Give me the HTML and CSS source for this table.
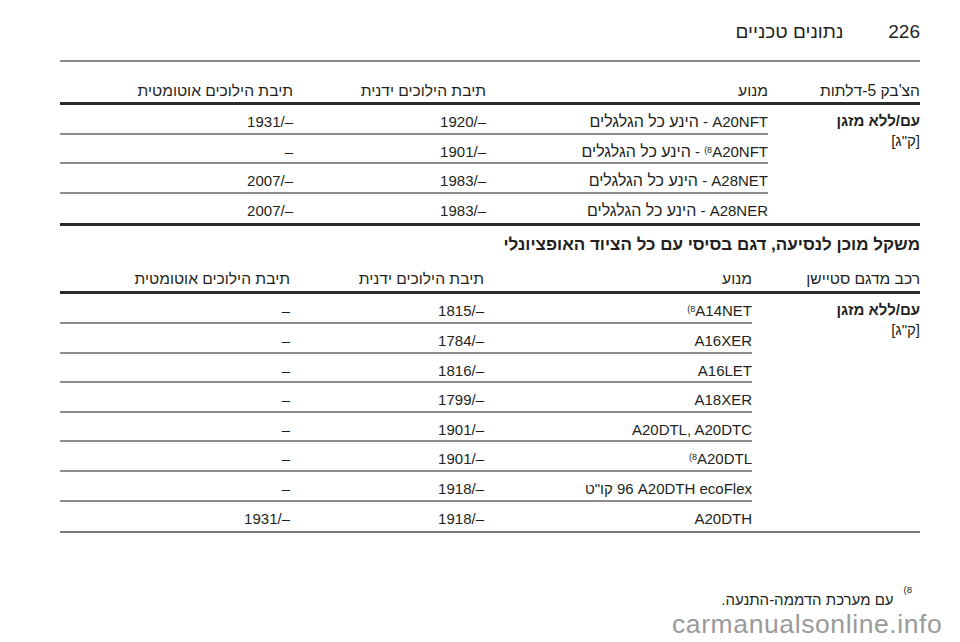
FILE: index.html
```html
<!DOCTYPE html>
<html lang="he" dir="rtl">
<head>
<meta charset="utf-8">
<title>226 נתונים טכניים</title>
<link rel="stylesheet" href="styles.css">
</head>
<body>
<div class="page">
  <header class="page-head">
    <span class="page-num">226</span>
    <span class="page-title">נתונים טכניים</span>
  </header>

  <div class="spec t1">
    <div class="th">הצ'בק 5-דלתות</div>
    <div class="th">מנוע</div>
    <div class="th">תיבת הילוכים ידנית</div>
    <div class="th">תיבת הילוכים אוטומטית</div>

    <div class="c1 rows4"><b>עם/ללא מזגן</b><br>[ק"ג]</div>
    <div class="td"><span dir="ltr"><bdi class="he">הינע כל הגלגלים</bdi> - A20NFT</span></div>
    <div class="td"><span dir="ltr">1920/–</span></div>
    <div class="td"><span dir="ltr">1931/–</span></div>

    <div class="td"><span dir="ltr"><bdi class="he">הינע כל הגלגלים</bdi> - <sup>(8</sup>A20NFT</span></div>
    <div class="td"><span dir="ltr">1901/–</span></div>
    <div class="td">–</div>

    <div class="td"><span dir="ltr"><bdi class="he">הינע כל הגלגלים</bdi> - A28NET</span></div>
    <div class="td"><span dir="ltr">1983/–</span></div>
    <div class="td"><span dir="ltr">2007/–</span></div>

    <div class="td last"><span dir="ltr"><bdi class="he">הינע כל הגלגלים</bdi> - A28NER</span></div>
    <div class="td last"><span dir="ltr">1983/–</span></div>
    <div class="td last"><span dir="ltr">2007/–</span></div>
  </div>

  <h2 class="section-title">משקל מוכן לנסיעה, דגם בסיסי עם כל הציוד האופציונלי</h2>

  <div class="spec t2">
    <div class="th">רכב מדגם סטיישן</div>
    <div class="th">מנוע</div>
    <div class="th">תיבת הילוכים ידנית</div>
    <div class="th">תיבת הילוכים אוטומטית</div>

    <div class="c1 rows8"><b>עם/ללא מזגן</b><br>[ק"ג]</div>
    <div class="td"><span dir="ltr"><sup>(8</sup>A14NET</span></div>
    <div class="td"><span dir="ltr">1815/–</span></div>
    <div class="td">–</div>

    <div class="td">A16XER</div>
    <div class="td"><span dir="ltr">1784/–</span></div>
    <div class="td">–</div>

    <div class="td">A16LET</div>
    <div class="td"><span dir="ltr">1816/–</span></div>
    <div class="td">–</div>

    <div class="td">A18XER</div>
    <div class="td"><span dir="ltr">1799/–</span></div>
    <div class="td">–</div>

    <div class="td"><span dir="ltr">A20DTL, A20DTC</span></div>
    <div class="td"><span dir="ltr">1901/–</span></div>
    <div class="td">–</div>

    <div class="td"><span dir="ltr"><sup>(8</sup>A20DTL</span></div>
    <div class="td"><span dir="ltr">1901/–</span></div>
    <div class="td">–</div>

    <div class="td"><span dir="ltr"><bdi>קו"ט</bdi> 96 A20DTH ecoFlex</span></div>
    <div class="td"><span dir="ltr">1918/–</span></div>
    <div class="td">–</div>

    <div class="td last">A20DTH</div>
    <div class="td last"><span dir="ltr">1918/–</span></div>
    <div class="td last"><span dir="ltr">1931/–</span></div>
  </div>

  <p class="footnote"><span class="fn-mark" dir="ltr">(8</span><span class="fn-text">עם מערכת הדממה-התנעה.</span></p>
</div>
<div class="watermark" dir="ltr">carmanualsonline.info</div>
</body>
</html>
```

FILE: styles.css
```css
* {
  box-sizing: border-box;
  margin: 0;
  padding: 0;
}

html,
body {
  width: 960px;
  height: 642px;
  background: #ffffff;
}

body {
  position: relative;
  overflow: hidden;
  font-family: "Liberation Sans", Arial, "DejaVu Sans", sans-serif;
  font-size: 15px;
  color: #231f20;
}

.page {
  margin: 0 40px 0 60px;
}

/* Page header */
.page-head {
  display: flex;
  align-items: baseline;
  gap: 45px;
  height: 62px;
  padding-top: 21px;
  border-bottom: 2px solid #8a8a8a;
  font-size: 19px;
  line-height: 22px;
}

/* Spec tables */
.spec {
  display: grid;
  border-bottom: 3px solid #2b2b2b;
}

.t1 {
  grid-template-columns: 152px 282px 193px 1fr;
  grid-template-rows: 43px repeat(4, 29.6px);
}

.t2 {
  grid-template-columns: 168px 268px 194px 1fr;
  grid-template-rows: 38px repeat(8, 29.6px);
  border-bottom: 2px solid #7a7a7a;
}

.th {
  font-size: 15.6px;
  line-height: 22px;
  border-bottom: 3px solid #2b2b2b;
  white-space: nowrap;
}

.t1 .th {
  padding-top: 18px;
}

.t2 .th {
  padding-top: 12px;
}

.td {
  padding-top: 6px;
  line-height: 22px;
  border-bottom: 2px solid #8c8c8c;
  white-space: nowrap;
}

.td .he {
  font-size: 16px;
}

.td.last {
  border-bottom: none;
}

.c1 {
  padding-top: 6px;
  line-height: 20px;
}

.rows4 {
  grid-row: span 4;
}

.rows8 {
  grid-row: span 8;
}

sup {
  font-size: 9px;
  vertical-align: 4px;
  line-height: 0;
}

/* Section title */
.section-title {
  margin-top: 8px;
  font-size: 17px;
  font-weight: bold;
  line-height: 22px;
}

/* Footnote */
.footnote {
  display: flex;
  align-items: baseline;
  gap: 10px;
  margin-top: 59px;
  padding-right: 8px;
  line-height: 16px;
}

.fn-mark {
  font-size: 9.5px;
  position: relative;
  top: -12px;
}

/* Watermark */
.watermark {
  position: absolute;
  left: 672px;
  top: 613px;
  font-size: 26.5px;
  line-height: 22px;
  letter-spacing: 0.6px;
  color: #9a9a9a;
  white-space: nowrap;
}
```
